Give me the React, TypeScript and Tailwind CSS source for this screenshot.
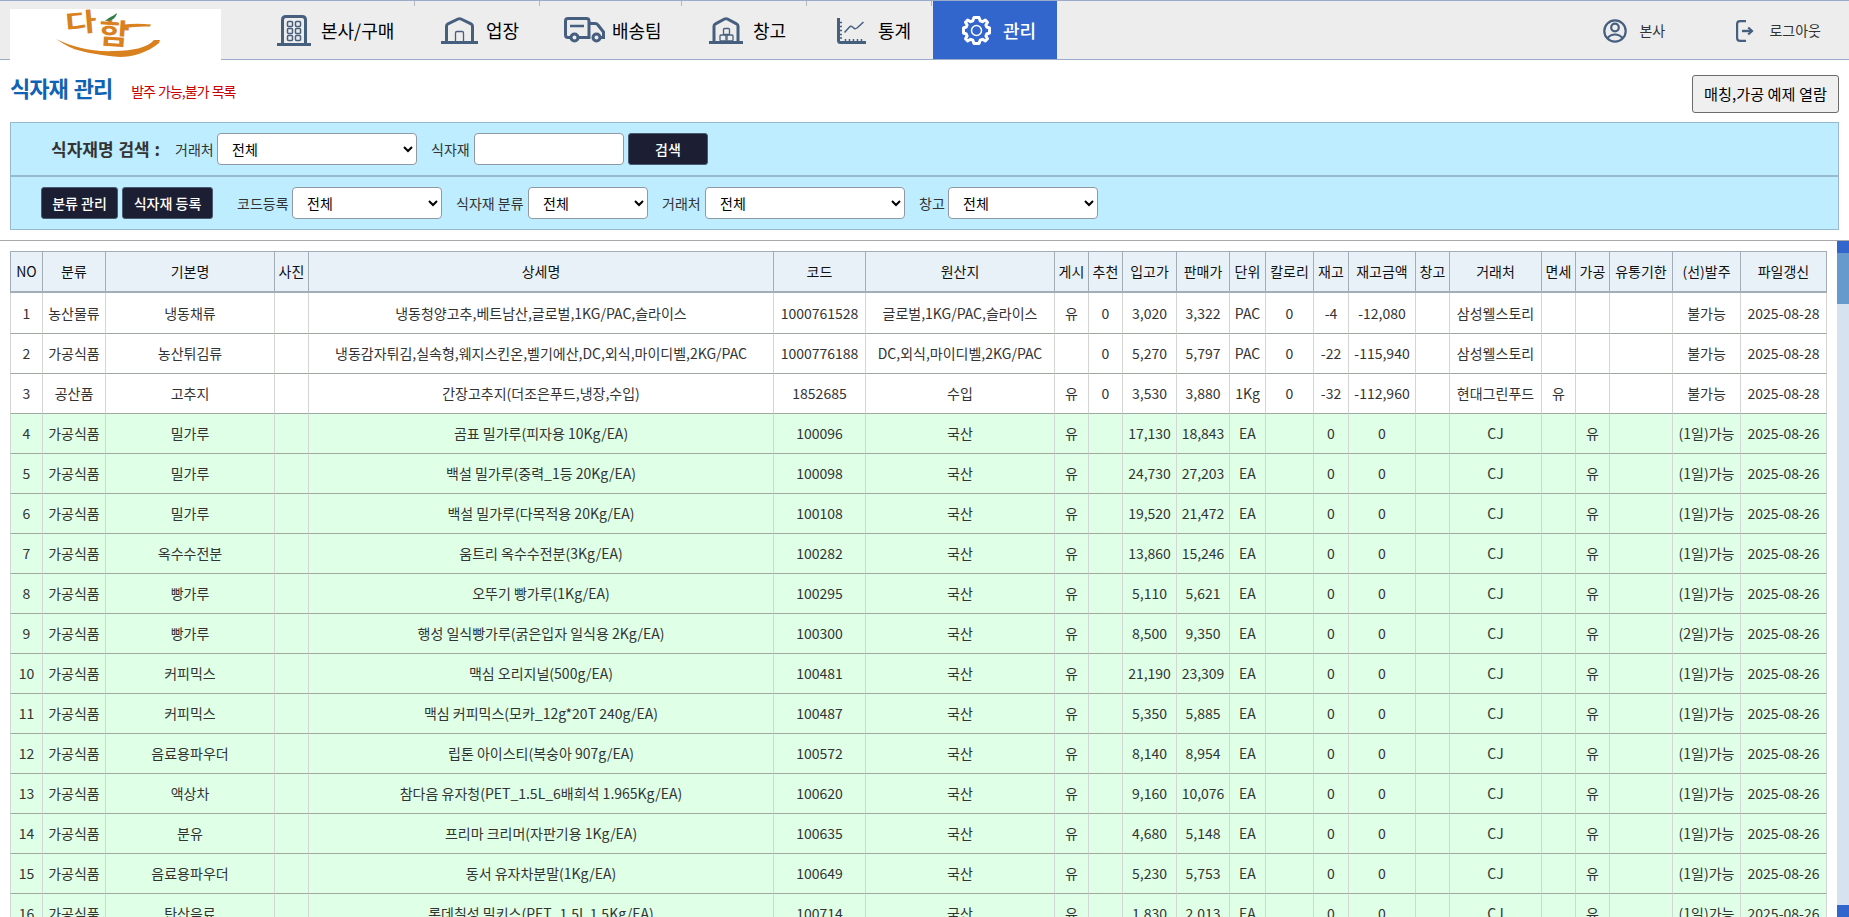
import type { ReactNode } from "react";

const C = "#465f7f";

function Logo() {
  return (
    <svg className="h-[51px] w-[211px] overflow-visible" viewBox="0 0 211 51">
      <g fill="#d9801f" fontWeight="700" className="font-['Noto_Sans_CJK_KR','Liberation_Sans',sans-serif]">
        <text transform="translate(56 24) rotate(-5) scale(1.32 .98)" fontSize="26">다</text>
        <text transform="translate(88 34) rotate(4) scale(1.28 1.12)" fontSize="26">함</text>
      </g>
      <path d="M114 15.500Q127 14 141 15.500L140 17.500Q127 17 114 19Z" fill="#d9801f" />
      <path d="M46 30C62 38 82 43 104 42C124 42 138 38 144 31L150 31L149 34C137 44 122 48 110 48C88 46 66 43 54 35Z" fill="#d9801f" />
      <path d="M95 12C99 8 102 8 107 4C106 9 102 12 95 12Z" fill="#2f7d43" />
    </svg>
  );
}

function OfficeIcon() {
  return (
    <svg className="mt-0.5 h-8 w-[34px]" viewBox="0 0 34 32" fill="none" stroke={C}>
      <path d="M0 29.500H34" strokeWidth="3" />
      <path d="M5.500 29V5Q5.500 1.500 9 1.500H25Q28.500 1.500 28.500 5V29" strokeWidth="3" />
      <g strokeWidth="1.500">
        <rect x="10.500" y="6.500" width="5" height="5" rx="1" />
        <rect x="18.500" y="6.500" width="5" height="5" rx="1" />
        <rect x="10.500" y="13.500" width="5" height="5" rx="1" />
        <rect x="18.500" y="13.500" width="5" height="5" rx="1" />
        <rect x="10.500" y="20.500" width="5" height="5" rx="1" />
        <rect x="18.500" y="20.500" width="5" height="5" rx="1" />
      </g>
    </svg>
  );
}

function StoreIcon() {
  return (
    <svg className="h-[27px] w-[37px]" viewBox="0 0 37 27" fill="none" stroke={C}>
      <path d="M0 25.500H37" strokeWidth="3" />
      <path d="M5.500 25V9Q5.500 7.500 7 6.800L17 2Q18.500 1.300 20 2L30 6.800Q31.500 7.500 31.500 9V25" strokeWidth="3" />
      <path d="M14.500 25V16Q14.500 14.500 16 14.500H21Q22.500 14.500 22.500 16V25" strokeWidth="1.300" />
    </svg>
  );
}

function TruckIcon() {
  return (
    <svg className="h-[26px] w-[41px]" viewBox="0 0 41 26" fill="none" stroke={C} strokeWidth="3">
      <path d="M6 20.500H4Q1.500 20.500 1.500 18V4Q1.500 1.500 4 1.500H22.500Q25 1.500 25 4V20.500H15" />
      <path d="M26 6.500H31Q33 6.500 34 8L39.500 15V20.500H37" />
      <circle cx="10.500" cy="20.500" r="3.500" />
      <circle cx="32.500" cy="20.500" r="3.500" />
      <path d="M6 9H20" strokeWidth="2.500" />
    </svg>
  );
}

function WarehouseIcon() {
  return (
    <svg className="h-[27px] w-[34px]" viewBox="0 0 34 27" fill="none" stroke={C}>
      <path d="M0 25.500H34" strokeWidth="3" />
      <path d="M5 25V9Q5 7.500 6.500 6.800L15.500 2Q17 1.300 18.500 2L27.500 6.800Q29 7.500 29 9V25" strokeWidth="3" />
      <g strokeWidth="1.300">
        <rect x="14.500" y="11.500" width="6" height="6" rx="1" />
        <rect x="11" y="18" width="6" height="6" rx="1" />
        <rect x="18" y="18" width="6" height="6" rx="1" />
      </g>
    </svg>
  );
}

function ChartIcon() {
  return (
    <svg className="mt-0.5 h-[26px] w-[29px]" viewBox="0 0 29 26" fill="none" stroke={C}>
      <path d="M1.500 0V22.500Q1.500 24.500 3.500 24.500H29" strokeWidth="3" />
      <path d="M3 4.500H5M3 8.500H5M3 12.500H5M3 16.500H5M3 20H5" strokeWidth="1.500" />
      <path d="M8.500 23V21M12.500 23V21M16.500 23V21M20.500 23V21M24.500 23V21" strokeWidth="1.500" />
      <path d="M7.500 14.500L12.500 9Q14 7.500 15.500 9L17.500 10.500Q18.500 11 20 10L26.500 4" strokeWidth="1.500" />
    </svg>
  );
}

function GearIcon() {
  return (
    <svg className="h-[29px] w-[29px]" viewBox="0 0 29 29" fill="none" stroke="#fff">
      <path
        d="M12 1.500H17L18.200 4.800L20.500 5.700L23.300 4L25.500 6.300L23.900 9L24.700 11L27.500 12V17L24.700 18L23.900 20L25.500 22.700L23.300 25L20.500 23.300L18.200 24.200L17 27.500H12L10.800 24.200L8.500 23.300L5.700 25L3.500 22.700L5.100 20L4.300 18L1.500 17V12L4.300 11L5.100 9L3.500 6.300L5.700 4L8.500 5.700L10.800 4.800Z"
        strokeWidth="3"
        strokeLinejoin="round"
      />
      <circle cx="14.500" cy="14.500" r="5" strokeWidth="1.500" />
    </svg>
  );
}

function UserIcon() {
  return (
    <svg className="mt-0.5 h-6 w-6" viewBox="0 0 24 24" fill="none" stroke={C} strokeWidth="2.200">
      <circle cx="12" cy="12" r="10.700" />
      <circle cx="12" cy="8.500" r="3.800" />
      <path d="M4.500 19Q7.500 15.500 12 15.500T19.500 19" />
    </svg>
  );
}

function LogoutIcon() {
  return (
    <svg className="mt-0.5 h-[22px] w-[18px]" viewBox="0 0 18 22" fill="none" stroke={C} strokeWidth="2.200">
      <path d="M10 1.100H4Q1.100 1.100 1.100 4V18Q1.100 20.900 4 20.900H10" />
      <path d="M6 11H16" strokeWidth="2.400" />
      <path d="M12.200 7.500L16 11L12.200 14.500" />
    </svg>
  );
}

function NavItem({ className, tick = true, children }: { className: string; tick?: boolean; children: ReactNode }) {
  return (
    <div className={`relative flex items-center text-lg leading-none ${className}`}>
      {children}
      {tick && <span className="absolute top-0 right-0 h-[5px] w-px bg-[#b4b8c0]" />}
    </div>
  );
}

function Select({ className }: { className: string }) {
  return (
    <select className={`h-8 rounded border border-[#8f98a3] bg-white pl-2.5 text-sm text-black ${className}`}>
      <option>전체</option>
    </select>
  );
}

function DarkButton({ className, children }: { className: string; children: ReactNode }) {
  return (
    <button className={`h-8 rounded-[3px] border border-[#4a5a70] bg-[#1c1f33] text-sm leading-none font-medium text-white ${className}`}>
      {children}
    </button>
  );
}

const widths = [33, 63, 169, 34, 465, 92, 189, 34, 34, 54, 53, 36, 48, 35, 67, 34, 92, 34, 34, 63, 68, 86];
const heads = ["NO", "분류", "기본명", "사진", "상세명", "코드", "원산지", "게시", "추천", "입고가", "판매가", "단위", "칼로리", "재고", "재고금액", "창고", "거래처", "면세", "가공", "유통기한", "(선)발주", "파일갱신"];

const top: string[][] = [
  ["1", "농산물류", "냉동채류", "", "냉동청양고추,베트남산,글로벌,1KG/PAC,슬라이스", "1000761528", "글로벌,1KG/PAC,슬라이스", "유", "0", "3,020", "3,322", "PAC", "0", "-4", "-12,080", "", "삼성웰스토리", "", "", "", "불가능", "2025-08-28"],
  ["2", "가공식품", "농산튀김류", "", "냉동감자튀김,실속형,웨지스킨온,벨기에산,DC,외식,마이디벨,2KG/PAC", "1000776188", "DC,외식,마이디벨,2KG/PAC", "", "0", "5,270", "5,797", "PAC", "0", "-22", "-115,940", "", "삼성웰스토리", "", "", "", "불가능", "2025-08-28"],
  ["3", "공산품", "고추지", "", "간장고추지(더조은푸드,냉장,수입)", "1852685", "수입", "유", "0", "3,530", "3,880", "1Kg", "0", "-32", "-112,960", "", "현대그린푸드", "유", "", "", "불가능", "2025-08-28"],
];

const items: [string, string, string, string, string, string][] = [
  ["밀가루", "곰표 밀가루(피자용 10Kg/EA)", "100096", "17,130", "18,843", "1"],
  ["밀가루", "백설 밀가루(중력_1등 20Kg/EA)", "100098", "24,730", "27,203", "1"],
  ["밀가루", "백설 밀가루(다목적용 20Kg/EA)", "100108", "19,520", "21,472", "1"],
  ["옥수수전분", "움트리 옥수수전분(3Kg/EA)", "100282", "13,860", "15,246", "1"],
  ["빵가루", "오뚜기 빵가루(1Kg/EA)", "100295", "5,110", "5,621", "1"],
  ["빵가루", "행성 일식빵가루(굵은입자 일식용 2Kg/EA)", "100300", "8,500", "9,350", "2"],
  ["커피믹스", "맥심 오리지널(500g/EA)", "100481", "21,190", "23,309", "1"],
  ["커피믹스", "맥심 커피믹스(모카_12g*20T 240g/EA)", "100487", "5,350", "5,885", "1"],
  ["음료용파우더", "립톤 아이스티(복숭아 907g/EA)", "100572", "8,140", "8,954", "1"],
  ["액상차", "참다음 유자청(PET_1.5L_6배희석 1.965Kg/EA)", "100620", "9,160", "10,076", "1"],
  ["분유", "프리마 크리머(자판기용 1Kg/EA)", "100635", "4,680", "5,148", "1"],
  ["음료용파우더", "동서 유자차분말(1Kg/EA)", "100649", "5,230", "5,753", "1"],
  ["탄산음료", "롯데칠성 밀키스(PET_1.5L 1.5Kg/EA)", "100714", "1,830", "2,013", "1"],
];

const rows: string[][] = [
  ...top,
  ...items.map(([name, detail, code, buy, sell, days], i) => [
    String(i + 4), "가공식품", name, "", detail, code, "국산", "유", "", buy, sell, "EA", "", "0", "0", "", "CJ", "", "유", "", `(${days}일)가능`, "2025-08-26",
  ]),
];

export default function App() {
  return (
    <div className="flex h-[917px] w-[1849px] flex-col overflow-hidden bg-white font-['Noto_Sans_CJK_KR','Liberation_Sans',sans-serif] text-sm text-[#333]">
      <header className="flex h-[60px] shrink-0 border-y border-[#9aacc9] bg-[#ededed] text-black">
        <div className="mt-2 -mb-px ml-2.5 w-[211px] bg-white">
          <Logo />
        </div>
        <NavItem className="w-[194px] gap-2.5 pl-14"><OfficeIcon />본사/구매</NavItem>
        <NavItem className="w-[125px] gap-2 pl-[26px]"><StoreIcon />업장</NavItem>
        <NavItem className="w-[142px] gap-[7px] pl-6"><TruckIcon />배송팀</NavItem>
        <NavItem className="w-[125px] gap-2.5 pl-[27px]"><WarehouseIcon />창고</NavItem>
        <NavItem className="mr-px w-[125px] gap-3 pl-[30px]"><ChartIcon />통계</NavItem>
        <NavItem className="w-[124px] gap-3 bg-[#3366cc] pl-[29px] font-medium text-white" tick={false}><GearIcon />관리</NavItem>
        <div className="ml-auto flex items-center pr-7 leading-none text-[#333]">
          <UserIcon />
          <span className="ml-3 w-[97px]">본사</span>
          <LogoutIcon />
          <span className="ml-[15px]">로그아웃</span>
        </div>
      </header>

      <div className="flex h-[62px] shrink-0 items-start pr-2.5 pl-2.5">
        <h1 className="mt-4 text-[22px] leading-[22px] font-bold tracking-[-1px] text-[#0f62b4] [word-spacing:2px]">식자재 관리</h1>
        <span className="mt-[23px] ml-[19px] leading-[16px] tracking-[-1px] text-[#c80000] [word-spacing:1px]">발주 가능,불가 목록</span>
        <button className="mt-[15px] ml-auto h-[38px] w-[147px] rounded-[3px] border border-[#6b6b6b] bg-[#efefef] text-[15.2px] leading-none text-black">
          매칭,가공 예제 열람
        </button>
      </div>

      <section className="mr-[10px] ml-2.5 h-[108px] shrink-0 border border-[#98b9cb] bg-[#bdedff]">
        <div className="flex h-[54px] items-center border-b-2 border-[#98b9cb] pl-10">
          <strong className="w-[124px] pb-0.5 text-[17px] leading-none [word-spacing:1px]">식자재명 검색 :</strong>
          <span className="w-[42px]">거래처</span>
          <Select className="w-[200px]" />
          <span className="ml-[14px] w-[43px]">식자재</span>
          <input className="h-8 w-[150px] rounded border border-[#8f98a3] bg-white" />
          <DarkButton className="ml-1 w-20">검색</DarkButton>
        </div>
        <div className="flex h-[52px] items-center pl-[30px]">
          <DarkButton className="w-[77px]">분류 관리</DarkButton>
          <DarkButton className="ml-1 w-[91px]">식자재 등록</DarkButton>
          <span className="ml-6 w-[55px]">코드등록</span>
          <Select className="w-[150px]" />
          <span className="ml-[14px] w-[72px]">식자재 분류</span>
          <Select className="w-[120px]" />
          <span className="ml-[14px] w-[43px]">거래처</span>
          <Select className="w-[200px]" />
          <span className="ml-[14px] w-[29px]">창고</span>
          <Select className="w-[150px]" />
        </div>
      </section>

      <div className="mt-2.5 flex min-h-0 flex-1 border-t border-[#a8a8a8]">
        <div className="min-h-0 flex-1 overflow-hidden pt-2.5 pl-2.5">
          <table className="w-[1817px] table-fixed border-separate border-spacing-0 text-center leading-5 whitespace-nowrap">
            <colgroup>
              {widths.map((w, i) => (
                <col key={i} style={{ width: w }} />
              ))}
            </colgroup>
            <thead>
              <tr className="bg-[#e9f1f8] text-[#111]">
                {heads.map((h) => (
                  <th key={h} className="h-[42px] border-t border-r border-b-2 border-[#a3adb5] p-0 pb-0.5 font-normal first:border-l">
                    {h}
                  </th>
                ))}
              </tr>
            </thead>
            <tbody>
              {rows.map((r, i) => (
                <tr key={i} className={i > 2 ? "bg-[#dfffe6]" : "bg-white"}>
                  {r.map((c, j) => (
                    <td key={j} className={`border-r border-b border-r-[#d2d7d3] border-b-[#a0a8a1] p-0 first:border-l first:border-l-[#d2d7d3] ${i === 0 ? "h-[41px]" : "h-10 pb-px"}`}>
                      {c}
                    </td>
                  ))}
                </tr>
              ))}
            </tbody>
          </table>
        </div>
        <div className="flex w-3 flex-col bg-[#d6e2f0]">
          <div className="h-3 bg-[#3366cc]" />
          <div className="h-[51px] bg-[#6699cc]" />
          <div className="mt-auto h-3 bg-[#3366cc]" />
        </div>
      </div>
    </div>
  );
}
